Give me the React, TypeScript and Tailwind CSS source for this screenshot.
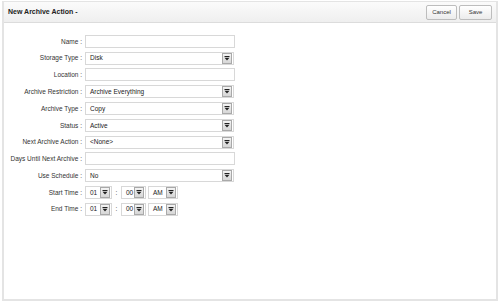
import type { ReactNode } from "react";

const font = { fontFamily: '"Liberation Sans", Arial, sans-serif' };

function Arrow() {
  return (
    <span className="flex items-center justify-center w-[10px] h-[11px] border border-[#a9a9a9] bg-gradient-to-b from-[#f4f4f4] to-[#d6d6d6]">
      <svg width="6" height="5" viewBox="0 0 6 5">
        <rect x="0.5" y="0" width="5" height="1" fill="#222" />
        <path d="M0.5 1.8 H5.5 L3 4.5 Z" fill="#222" />
      </svg>
    </span>
  );
}

function Select({ value, w = "w-[149px]" }: { value: string; w?: string }) {
  return (
    <div className={`${w} h-[13px] border border-[#d8d8d8] bg-white flex items-center justify-between pl-[4px] pr-[1px]`}>
      <span>{value}</span>
      <Arrow />
    </div>
  );
}

function Input() {
  return <div className="w-[150px] h-[13px] border border-[#d8d8d8] bg-white" />;
}

function Row({ label, children }: { label: string; children: ReactNode }) {
  return (
    <div className="flex items-center h-[16.8px]">
      <div className="w-[81px] pr-[3px] text-right text-[#333] whitespace-nowrap">{label} :</div>
      {children}
    </div>
  );
}

function Time() {
  return (
    <div className="flex items-center">
      <Select value="01" w="w-[27px]" />
      <span className="w-[9px] text-center text-[#333]">:</span>
      <Select value="00" w="w-[25px]" />
      <span className="w-[2px]" />
      <Select value="AM" w="w-[30px]" />
    </div>
  );
}

export default function App() {
  return (
    <div style={font} className="w-[500px] h-[302px] bg-white pt-[1px] pl-[2px] text-[6.5px] text-[#222]">
      <div className="w-[496px] h-[300px] border-2 border-[#e4e4e4] border-t-[1px] flex flex-col">
        <div className="h-[21px] flex items-center justify-between pl-[4px] pr-[4px] border-b border-[#dcdcdc] bg-gradient-to-b from-[#fbfbfb] to-[#efefef]">
          <h2 className="font-bold text-[7px] text-[#222]">New Archive Action -</h2>
          <div className="flex gap-[2px]">
            <button className="w-[31px] h-[15px] border border-[#bdbdbd] rounded-[2px] bg-gradient-to-b from-white to-[#ececec] text-[6px] text-[#333]">
              Cancel
            </button>
            <button className="w-[33px] h-[15px] border border-[#bdbdbd] rounded-[2px] bg-gradient-to-b from-white to-[#ececec] text-[6px] text-[#333]">
              Save
            </button>
          </div>
        </div>
        <div className="pt-[10px] flex flex-col">
          <Row label="Name"><Input /></Row>
          <Row label="Storage Type"><Select value="Disk" /></Row>
          <Row label="Location"><Input /></Row>
          <Row label="Archive Restriction"><Select value="Archive Everything" /></Row>
          <Row label="Archive Type"><Select value="Copy" /></Row>
          <Row label="Status"><Select value="Active" /></Row>
          <Row label="Next Archive Action"><Select value="<None>" /></Row>
          <Row label="Days Until Next Archive"><Input /></Row>
          <Row label="Use Schedule"><Select value="No" /></Row>
          <Row label="Start Time"><Time /></Row>
          <Row label="End Time"><Time /></Row>
        </div>
      </div>
    </div>
  );
}
